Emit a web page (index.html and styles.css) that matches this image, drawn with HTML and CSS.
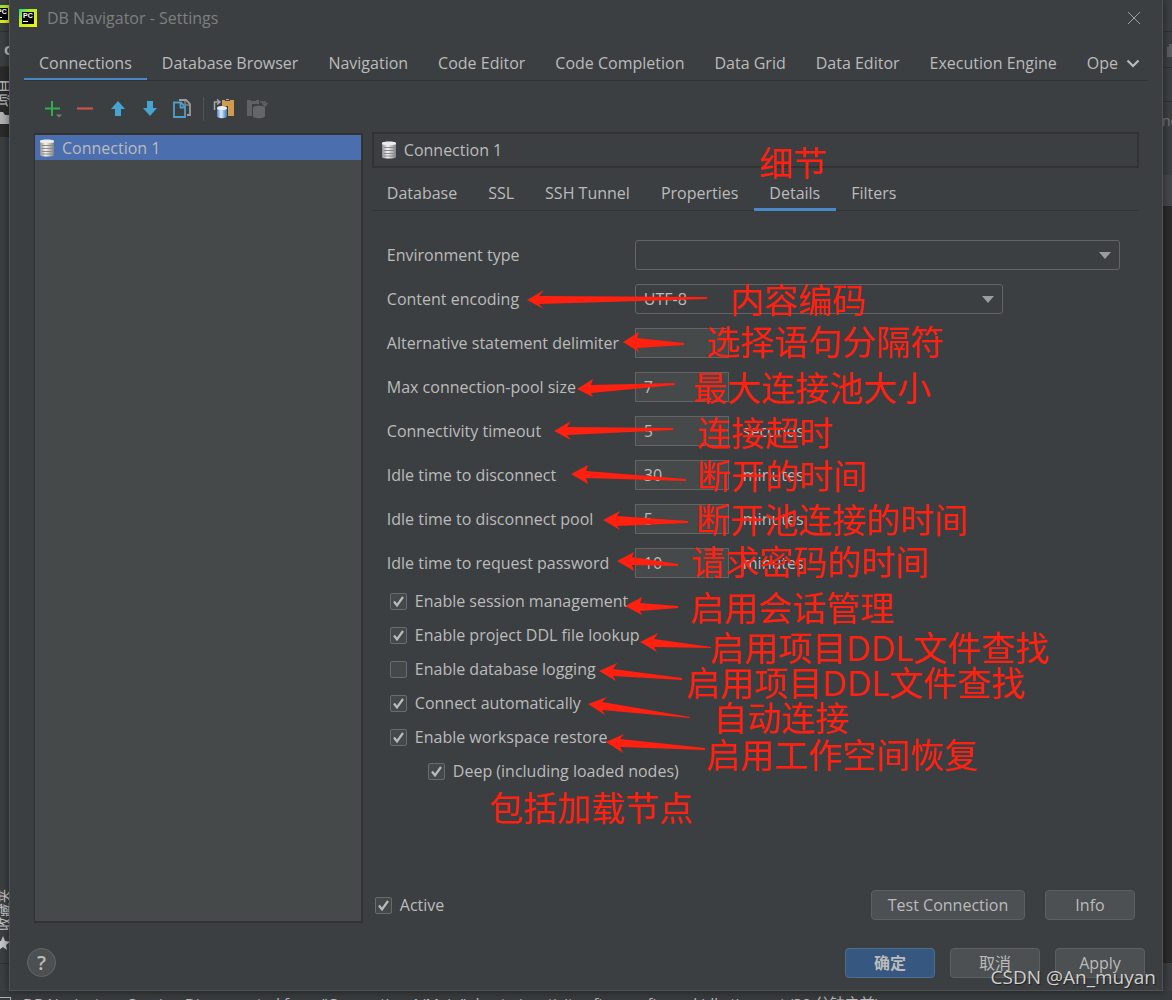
FILE: index.html
```html
<!DOCTYPE html>
<html lang="en">
  <head>
    <meta charset="UTF-8" />
    <meta name="viewport" content="width=device-width, initial-scale=1.0" />
    <title>DB Navigator - Settings</title>
    <link rel="stylesheet" href="styles.css">
  </head>
  <body>
    <!-- Shared icons -->
    <svg class="defs" aria-hidden="true">
      <defs>
        <linearGradient id="metal" x1="0" x2="1" y1="0" y2="0">
          <stop offset="0" stop-color="#8c8c8c" />
          <stop offset="0.4" stop-color="#f4f4f4" />
          <stop offset="1" stop-color="#828282" />
        </linearGradient>
        <linearGradient id="blueCan" x1="0" x2="1" y1="0" y2="0">
          <stop offset="0" stop-color="#4e86c4" />
          <stop offset="0.4" stop-color="#dcecfb" />
          <stop offset="1" stop-color="#3f78b8" />
        </linearGradient>
        <linearGradient id="pcEdge" x1="0" x2="1" y1="0" y2="1">
          <stop offset="0" stop-color="#21d789" />
          <stop offset="0.35" stop-color="#b4e92c" />
          <stop offset="1" stop-color="#f6f01a" />
        </linearGradient>
        <symbol id="db" viewBox="0 0 16 18">
          <path d="M1 3v13c0 1 3 1.500 7 1.500s7-.5 7-1.500V3z" fill="url(#metal)" />
          <path d="M3 6.500h11M3 9.500h11M3 12.500h11M3 15h11" stroke="#8a8a8a" fill="none" />
          <path d="M1 2c0-2 14-2 14 0v1c0 1.500-14 1.500-14 0z" fill="#ececec" />
        </symbol>
        <symbol id="pycharm" viewBox="0 0 18 18">
          <rect width="18" height="18" fill="url(#pcEdge)" />
          <rect x="3" y="3" width="12" height="12" fill="#060606" />
          <text x="4" y="9" class="pc-text">PC</text>
          <rect x="4" y="12" width="5" height="1" fill="#fff" />
        </symbol>
      </defs>
    </svg>

    <div class="ide">
      <aside class="ide-left" aria-hidden="true">
        <svg width="9" height="991" viewBox="0 0 9 991">
          <rect y="67" width="9" height="70" fill="#2b2b2b" />
          <path d="M0 31.500h9M0 66.500h9M0 963.500h9" stroke="#2f3132" />
          <use href="#pycharm" x="-7" y="5" width="18" height="18" />
          <text x="4" y="55" class="strip-bold">c</text>
          <text transform="translate(9 107) rotate(-90)" class="strip-text">项目</text>
          <text transform="translate(9 931) rotate(-90)" class="strip-text">收藏夹</text>
          <path d="M0 112h3l2 3h4v9H0z" fill="#afb1b3" />
          <path d="M3 936l2 5 5 .5-4 3.500 1 5-4-3-4 3 1-5-4-3.500 5-.5z" fill="#c4c6c8" />
        </svg>
      </aside>

      <main class="dialog">
        <header class="title-bar">
          <svg width="18" height="18"><use href="#pycharm" /></svg>
          <h1>DB Navigator - Settings</h1>
          <button class="close" aria-label="Close">
            <svg width="14" height="14" viewBox="0 0 14 14"><path d="M1 1l12 12M13 1L1 13" stroke="#a0a2a3" fill="none" /></svg>
          </button>
        </header>

        <nav class="tabs main-tabs">
          <button class="tab active">Connections</button>
          <button class="tab">Database Browser</button>
          <button class="tab">Navigation</button>
          <button class="tab">Code Editor</button>
          <button class="tab">Code Completion</button>
          <button class="tab">Data Grid</button>
          <button class="tab">Data Editor</button>
          <button class="tab">Execution Engine</button>
          <button class="tab last">Ope</button>
          <button class="more" aria-label="More tabs">
            <svg width="14" height="10" viewBox="0 0 14 10"><path d="M1.500 1.500L7 7l5.500-5.500" stroke="#bbb" stroke-width="2.200" fill="none" /></svg>
          </button>
        </nav>

        <div class="content">
          <section class="sidebar">
            <div class="toolbar">
              <button aria-label="Add">
                <svg width="20" height="20" viewBox="0 0 20 20"><path d="M9 2v15M2 9.500h15" stroke="#2fae4e" stroke-width="2" fill="none" /><path d="M13 15.500h6l-3 3z" fill="#7d7f80" /></svg>
              </button>
              <button aria-label="Remove">
                <svg width="20" height="20" viewBox="0 0 20 20"><path d="M2 9.500h16" stroke="#cc5347" stroke-width="2.200" /></svg>
              </button>
              <button aria-label="Move up">
                <svg width="20" height="20" viewBox="0 0 20 20"><path d="M11 2l7 8h-4v7H8v-7H4z" fill="#47a3cf" /></svg>
              </button>
              <button aria-label="Move down">
                <svg width="20" height="20" viewBox="0 0 20 20"><path d="M11 17l7-8h-4V2H8v7H4z" fill="#47a3cf" /></svg>
              </button>
              <button aria-label="Duplicate">
                <svg width="20" height="20" viewBox="0 0 20 20"><path d="M8 1h7l4 4v11h-3" stroke="#9a9c9e" stroke-width="1.800" fill="none" /><path d="M14 1v5h5" stroke="#9a9c9e" fill="none" /><path d="M3 3.500h7l4 4V18H3zM9.500 3.500v5h5" stroke="#4f9dcb" stroke-width="1.800" fill="none" /></svg>
              </button>
              <span class="divider"></span>
              <button aria-label="Copy to clipboard">
                <svg width="22" height="20" viewBox="0 0 22 20"><path d="M9 1h3v1h5V1h4v16h-6V7H9z" fill="#d19a4e" /><path d="M13 0h3v1h-3z" fill="#aaa" /><path d="M1.500 11V3h5M4 .5L7 3 4 5.500" stroke="#a4a6a8" stroke-width="1.500" fill="none" /><path d="M4 9v8c0 3 10 3 10 0V9z" fill="url(#blueCan)" /><ellipse cx="9" cy="9" rx="5" ry="2" fill="#e9f2fc" /></svg>
              </button>
              <button aria-label="Paste from clipboard" disabled>
                <svg width="22" height="20" viewBox="0 0 22 20"><path d="M0 1h4v1h5V1h3v4H5v12H0z" fill="#5f6163" /><path d="M13 3h5v3M15.500 4L18 7l2.500-3" stroke="#5f6163" stroke-width="1.500" fill="none" /><path d="M6 9v8c0 3 12 3 12 0V9c0-3-12-3-12 0z" fill="#646567" /></svg>
              </button>
            </div>
            <ul class="connection-list">
              <li class="selected"><svg width="16" height="18"><use href="#db" /></svg>Connection 1</li>
            </ul>
          </section>

          <section class="details">
            <h2 class="connection-name"><svg width="16" height="18"><use href="#db" /></svg>Connection 1</h2>

            <nav class="tabs">
              <button class="tab">Database</button>
              <button class="tab">SSL</button>
              <button class="tab">SSH Tunnel</button>
              <button class="tab">Properties</button>
              <button class="tab active">Details</button>
              <button class="tab">Filters</button>
            </nav>

            <form class="form">
              <div class="row">
                <label for="environment">Environment type</label>
                <select id="environment"><option></option></select>
              </div>
              <div class="row">
                <label for="encoding">Content encoding</label>
                <select id="encoding" class="short"><option>UTF-8</option></select>
              </div>
              <div class="row">
                <label for="delimiter">Alternative statement delimiter</label>
                <input id="delimiter" type="text">
              </div>
              <div class="row">
                <label for="poolSize">Max connection-pool size</label>
                <input id="poolSize" type="text" value="7">
              </div>
              <div class="row">
                <label for="timeout">Connectivity timeout</label>
                <input id="timeout" type="text" value="5"><span>seconds</span>
              </div>
              <div class="row">
                <label for="idle">Idle time to disconnect</label>
                <input id="idle" type="text" value="30"><span>minutes</span>
              </div>
              <div class="row">
                <label for="idlePool">Idle time to disconnect pool</label>
                <input id="idlePool" type="text" value="5"><span>minutes</span>
              </div>
              <div class="row">
                <label for="idlePassword">Idle time to request password</label>
                <input id="idlePassword" type="text" value="10"><span>minutes</span>
              </div>

              <div class="checks">
                <label class="check"><input type="checkbox" checked>Enable session management</label>
                <label class="check"><input type="checkbox" checked>Enable project DDL file lookup</label>
                <label class="check"><input type="checkbox">Enable database logging</label>
                <label class="check"><input type="checkbox" checked>Connect automatically</label>
                <label class="check"><input type="checkbox" checked>Enable workspace restore</label>
                <label class="check nested"><input type="checkbox" checked>Deep (including loaded nodes)</label>
              </div>
            </form>

            <div class="connection-actions">
              <label class="check"><input type="checkbox" checked>Active</label>
              <button class="button wide">Test Connection</button>
              <button class="button">Info</button>
            </div>
          </section>
        </div>

        <footer class="footer">
          <button class="help" aria-label="Help">?</button>
          <button class="button primary">确定</button>
          <button class="button">取消</button>
          <button class="button">Apply</button>
        </footer>
      </main>

      <aside class="ide-right" aria-hidden="true">
        <svg width="9" height="991" viewBox="0 0 9 991">
          <path d="M0 31.500h9M0 67.500h9M0 101.500h9" stroke="#2f3132" />
          <path d="M4 47h5v10H4zM6 44h3v3H6z" fill="#5b5d5f" />
          <text x="-1" y="126" class="strip-dim">ne</text>
          <rect y="175" width="9" height="31" fill="#45484a" />
          <rect y="206" width="9" height="757" fill="#2b2b2b" />
        </svg>
      </aside>

      <div class="status-bar"><span class="status-icon"></span><span>DB Navigator - Session Disconnected from "Connection 1/Main" due to inactivity after configured idle timeout (30 分钟之前)</span></div>
    </div>

    <!-- Hand-drawn notes over the dialog -->
    <svg class="notes" width="1172" height="1000" viewBox="0 0 1172 1000">
      <g class="arrows">
        <path d="M527 300l17-10-5 6 168 1v2l-168 5 5 5z" />
        <path d="M623 342l16-10-2 6 47 5v2l-47 3 2 4z" />
        <path d="M577 389l16-10-2 6 84-2v2l-84 8 2 4z" />
        <path d="M554 431l17-10-4 6 106 1v2l-106 5 4 5z" />
        <path d="M571 474l17-9-2 6 100 8v2l-100-3 2 6z" />
        <path d="M603 520l17-9-3 5 71 5v2l-71 3 3 4z" />
        <path d="M617 561l17-9-2 5 46 7v2l-46-1 2 6z" />
        <path d="M625 606l17-9-2 6 38 3v2l-38 3 2 4z" />
        <path d="M640 642l18-9-4 6 57 8v1l-57-1 3 5z" />
        <path d="M599 671l18-8-4 6 69 9v2l-69-4 3 5z" />
        <path d="M588 704l19-7-5 5 88 15v1l-88-8 3 5z" />
        <path d="M606 742l18-8-4 5 85 9v2l-85-3 3 6z" />
      </g>
      <g class="note-text">
        <text x="759" y="176">细节</text>
        <text x="730" y="313">内容编码</text>
        <text x="706" y="355">选择语句分隔符</text>
        <text x="693" y="401">最大连接池大小</text>
        <text x="697" y="446">连接超时</text>
        <text x="697" y="489">断开的时间</text>
        <text x="696" y="533">断开池连接的时间</text>
        <text x="691" y="575">请求密码的时间</text>
        <text x="690" y="621">启用会话管理</text>
        <text x="710" y="661">启用项目DDL文件查找</text>
        <text x="686" y="696">启用项目DDL文件查找</text>
        <text x="713" y="731">自动连接</text>
        <text x="706" y="768">启用工作空间恢复</text>
        <text x="489" y="821">包括加载节点</text>
      </g>
    </svg>
    <p class="watermark">CSDN @An_muyan</p>
  </body>
</html>
```
FILE: styles.css
```css
* {
  margin: 0;
  padding: 0;
  box-sizing: border-box;
}

body {
  position: relative;
  background-color: #3c3f41;
  color: #bbbbbb;
  font-family: "Open Sans", "Noto Sans CJK SC", sans-serif;
  font-size: 16px;
  line-height: 24px;
}

button,
input,
select {
  font: inherit;
  color: inherit;
}

button {
  background: none;
  border: none;
}

svg {
  display: block;
  flex: none;
}

.defs {
  position: absolute;
  width: 0;
  height: 0;
}

/* IDE window behind the dialog */
.ide {
  display: grid;
  grid-template-columns: 9px 1fr 9px;
  grid-template-rows: 1fr 9px;
  height: 100vh;
  min-height: 860px;
  overflow: hidden;
}

.ide-left,
.ide-right {
  overflow: hidden;
}

.strip-text {
  font-size: 14px;
  fill: #c8c8c8;
}

.strip-bold {
  font-size: 16px;
  font-weight: bold;
  fill: #bbbbbb;
}

.strip-dim {
  font-size: 14px;
  fill: #77797b;
}

.pc-text {
  font-family: "Liberation Sans", sans-serif;
  font-size: 7px;
  font-weight: bold;
  fill: #ffffff;
}

.status-bar {
  grid-column: 1 / 4;
  display: flex;
  gap: 12px;
  height: 9px;
  padding-top: 3px;
  font-size: 15px;
  line-height: 18px;
  white-space: nowrap;
  overflow: hidden;
  background-color: #383b3d;
}

.status-icon {
  width: 11px;
  height: 12px;
  margin-top: 3px;
  border: 1px solid #afb1b3;
  border-left: none;
}

/* Dialog */
.dialog {
  display: flex;
  flex-direction: column;
  min-width: 0;
  border: 1px solid #515455;
  border-top: none;
  background-color: #3c3f41;
  box-shadow: 0 0 8px rgba(0, 0, 0, 0.5);
  z-index: 1;
}

.title-bar {
  display: flex;
  align-items: center;
  gap: 10px;
  height: 36px;
  padding: 0 21px 0 9px;
}

.title-bar h1 {
  flex: 1;
  font-size: 16px;
  font-weight: normal;
  color: #7d7f80;
}

/* Tabs */
.tabs {
  display: flex;
  border-bottom: 1px solid #323232;
}

.tab {
  height: 35px;
  margin-bottom: -1px;
  padding: 2px 16px 0 15px;
  border-bottom: 3px solid transparent;
  white-space: nowrap;
}

.tab.active {
  border-bottom-color: #4a88c7;
}

.main-tabs {
  height: 45px;
  margin: 0 14px;
  overflow: hidden;
}

.main-tabs .tab {
  height: 45px;
  padding: 12px 15px 0;
}

.main-tabs .last {
  padding-right: 0;
}

.more {
  flex: none;
  margin-left: auto;
  padding: 12px 10px 0 8px;
}

/* Content */
.content {
  flex: 1;
  display: flex;
  gap: 9px;
  padding: 0 23px 0 24px;
  min-height: 0;
}

.sidebar {
  flex: 3;
  display: flex;
  flex-direction: column;
}

.toolbar {
  display: flex;
  align-items: center;
  gap: 12px;
  height: 52px;
  padding: 4px 0 0 9px;
}

.divider {
  width: 1px;
  height: 24px;
  margin-right: -3px;
  background-color: #515355;
}

.connection-list {
  flex: 1;
  border: 2px solid #323232;
  border-left-width: 1px;
  background-color: #45494a;
  list-style: none;
}

.connection-list li {
  display: flex;
  align-items: center;
  gap: 7px;
  height: 25px;
  padding-left: 4px;
}

.connection-list .selected {
  background-color: #4b6eaf;
}

.details {
  flex: 7;
  display: flex;
  flex-direction: column;
  padding-top: 51px;
}

.connection-name {
  display: flex;
  align-items: center;
  gap: 7px;
  height: 36px;
  padding-left: 7px;
  margin-bottom: 8px;
  border: 2px solid #323232;
  font-size: 16px;
  font-weight: normal;
}

.form {
  flex: 1;
  display: flex;
  flex-direction: column;
  gap: 14px;
  padding: 29px 19px 0 15px;
}

.row {
  display: flex;
  align-items: center;
  height: 30px;
}

.row label {
  width: 248px;
  flex: none;
}

.row select {
  flex: 1;
  height: 30px;
  padding: 0 8px;
  border: 1px solid #646464;
  border-radius: 3px;
  appearance: none;
  background-color: #3c3f41;
  background-image: url("data:image/svg+xml,%3Csvg xmlns='http://www.w3.org/2000/svg' viewBox='0 0 12 7'%3E%3Cpath d='M0 0h12L6 7z' fill='%239a9da0'/%3E%3C/svg%3E");
  background-repeat: no-repeat;
  background-position: right 8px center;
  background-size: 12px 7px;
}

.row .short {
  flex: none;
  width: 76%;
  max-width: 368px;
}

.row input {
  width: 94px;
  height: 30px;
  padding: 0 8px;
  border: 1px solid #646464;
  background-color: #45494a;
}

.row span {
  margin-left: 14px;
}

.checks {
  display: flex;
  flex-direction: column;
  gap: 10px;
  margin-top: -3px;
  padding: 0 3px;
}

.check {
  display: flex;
  align-items: center;
  gap: 8px;
}

.check input {
  width: 17px;
  height: 17px;
  border: 1px solid #6b6b6b;
  border-radius: 2px;
  appearance: none;
  background-color: #43494a;
}

.check input:checked {
  background-image: url("data:image/svg+xml,%3Csvg xmlns='http://www.w3.org/2000/svg' viewBox='0 0 15 15'%3E%3Cpath d='M3 7.500l3 4 6-8.500' fill='none' stroke='%23bbbbbb' stroke-width='2.200'/%3E%3C/svg%3E");
}

.nested {
  padding-left: 38px;
}

/* Buttons */
.connection-actions {
  display: flex;
  align-items: center;
  gap: 20px;
  height: 30px;
  margin-bottom: 3px;
  padding: 0 4px 0 3px;
}

.connection-actions .check {
  margin-right: auto;
}

.button {
  width: 90px;
  height: 30px;
  border: 1px solid #5e6060;
  border-radius: 4px;
  background-color: #4c5052;
}

.button.wide {
  width: 154px;
}

.button.primary {
  border-color: #4c708c;
  background-color: #365880;
  font-weight: bold;
}

.footer {
  display: flex;
  align-items: center;
  gap: 15px;
  height: 67px;
  padding: 12px 17px 0;
}

.help {
  width: 29px;
  height: 29px;
  margin-right: auto;
  border: 1px solid #646769;
  border-radius: 50%;
  background-color: #4c5052;
  font-size: 20px;
  font-weight: 600;
}

/* Notes */
.notes {
  position: absolute;
  top: 0;
  left: 0;
  z-index: 2;
  pointer-events: none;
}

.arrows {
  fill: #ff2010;
}

.note-text {
  fill: #ff2010;
  font-size: 34px;
}

.watermark {
  position: absolute;
  right: 16px;
  bottom: 11px;
  z-index: 3;
  color: #d0d0d0;
  font-size: 19px;
  text-shadow: 1px 1px 1px #222222;
}
```
